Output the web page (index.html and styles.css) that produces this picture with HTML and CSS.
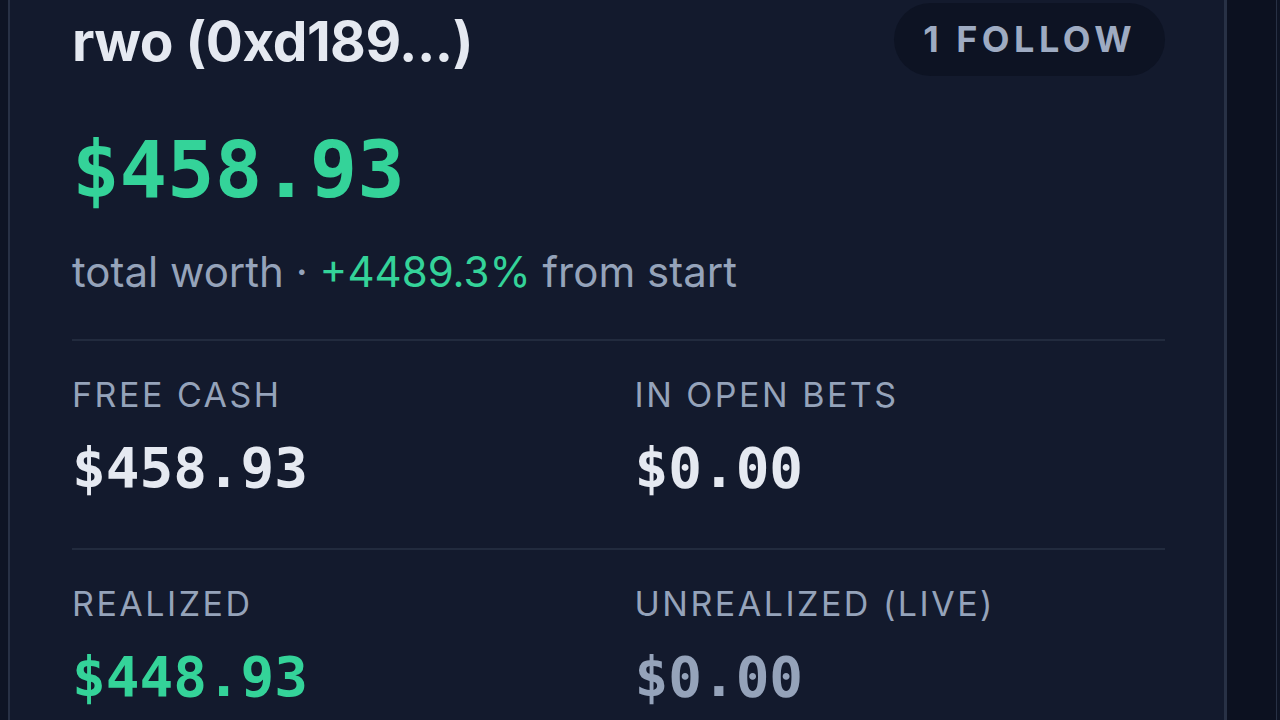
FILE: index.html
```html
<html>
	<head>
		<title>Portfolio</title>
		<link rel="stylesheet" href="styles.css">
	</head>
	<body>
		<div id="page">
			<div class="edge"></div>
			<section class="card">
				<header class="cardHead">
					<h1 class="name">rwo (0xd189...)</h1>
					<span class="follow">1 FOLLOW</span>
				</header>
				<div class="worth">$458.93</div>
				<p class="worthSub">total worth · <span class="up">+4489.3%</span> from start</p>
				<div class="stats">
					<div class="stat">
						<div class="statLabel">FREE CASH</div>
						<div class="statValue">$458.93</div>
					</div>
					<div class="stat">
						<div class="statLabel">IN OPEN BETS</div>
						<div class="statValue">$0.00</div>
					</div>
				</div>
				<div class="stats">
					<div class="stat">
						<div class="statLabel">REALIZED</div>
						<div class="statValue up">$448.93</div>
					</div>
					<div class="stat">
						<div class="statLabel">UNREALIZED (LIVE)</div>
						<div class="statValue muted">$0.00</div>
					</div>
				</div>
			</section>
			<aside class="side"></aside>
		</div>
	</body>
</html>
```

FILE: styles.css
```css
body {
	margin:0;
	--card-color: #131a2d;
	--edge-color: #0e1424;
	--line-color: #222b3e;
	--text-color: #e5e9f1;
	--muted-color: #95a3ba;
	--green-color: #34d399;

	background-color:var(--edge-color);
	font-family: Inter, "Noto Sans", sans-serif;
	overflow:hidden;
}

#page {
	display:flex;
	height:720px;
	overflow:hidden;
}

.edge {
	width:8px;
	flex:none;
}

.card {
	width:1219px;
	flex:none;
	box-sizing:border-box;
	padding:3px 59px 0 62px;
	border-left:2px solid #283145;
	border-right:3px solid #283145;
	background-color:var(--card-color);
	color:var(--text-color);
	overflow:hidden;
}

.cardHead {
	display:flex;
	justify-content:space-between;
	align-items:center;
}

.name {
	margin:3px 0 0 0;
	font-size:55px;
	font-weight:700;
	letter-spacing:-0.5px;
	line-height:1.2;
}

.follow {
	padding:15px 29px 15px 29px;
	border-radius:40px;
	background-color:#0d1323;
	color:#9eabc2;
	font-size:36px;
	font-weight:700;
	letter-spacing:4.5px;
	line-height:1.2;
}

.worth {
	margin-top:55px;
	font-family: "DejaVu Sans Mono", monospace;
	font-weight:700;
	font-size:79px;
	line-height:1;
	color:var(--green-color);
}

.worthSub {
	margin:38px 0 43px 0;
	font-size:42px;
	line-height:1.15;
	color:var(--muted-color);
}

.up {
	color:var(--green-color);
}

.muted {
	color:var(--muted-color);
}

.stats {
	display:grid;
	grid-template-columns:1fr 1fr;
	column-gap:32px;
	border-top:2px solid var(--line-color);
	padding:34px 0 52px 0;
}

.statLabel {
	font-size:34px;
	line-height:1.2;
	letter-spacing:2.5px;
	color:var(--muted-color);
}

.statValue {
	margin-top:24px;
	font-family: "DejaVu Sans Mono", monospace;
	font-weight:700;
	font-size:56px;
	line-height:1;
}

.side {
	width:49px;
	flex:none;
	background-color:#0c1120;
	border-right:1px solid #283145;
}
```
